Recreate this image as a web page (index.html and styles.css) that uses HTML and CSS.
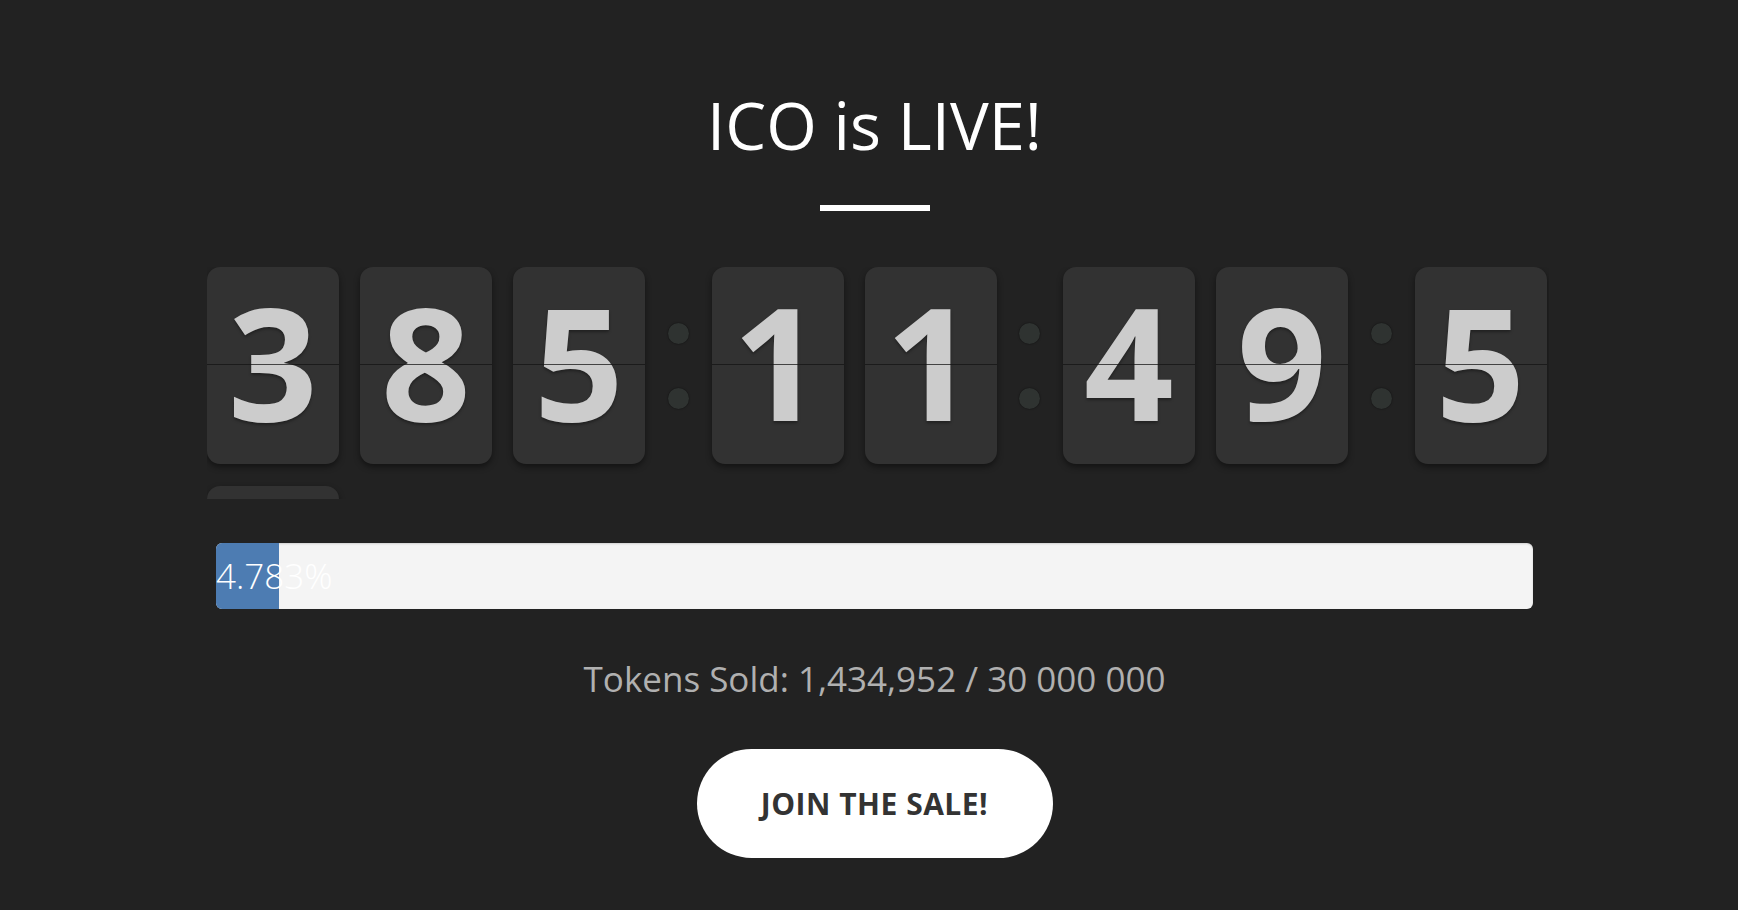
FILE: index.html
```html
<!DOCTYPE html>
<html lang="en">
<head>
<meta charset="utf-8">
<title>ICO is LIVE!</title>
<link rel="stylesheet" href="styles.css">
</head>
<body>
<main class="page">
  <section class="ico">
    <h1 class="ico-title">ICO is LIVE!</h1>
    <div class="ico-rule"></div>
    <div class="countdown">
      <div class="card">3</div>
      <div class="card">8</div>
      <div class="card">5</div>
      <div class="sep"><span class="dot"></span><span class="dot"></span></div>
      <div class="card">1</div>
      <div class="card">1</div>
      <div class="sep"><span class="dot"></span><span class="dot"></span></div>
      <div class="card">4</div>
      <div class="card">9</div>
      <div class="sep"><span class="dot"></span><span class="dot"></span></div>
      <div class="card">5</div>
      <div class="card">2</div>
    </div>
    <div class="progress">
      <div class="progress-fill" style="width: 4.783%"><span class="progress-label">4.783%</span></div>
    </div>
    <p class="sold">Tokens Sold: 1,434,952 / 30 000 000</p>
    <a class="join" href="#">JOIN THE SALE!</a>
  </section>
</main>
</body>
</html>
```

FILE: styles.css
```css
html, body {
  margin: 0;
  padding: 0;
  background: #222222;
}

body {
  font-family: "Open Sans", "Liberation Sans", sans-serif;
  color: #ffffff;
}

.page {
  padding-left: 11px;
  padding-top: 80px;
  height: 830px;
  overflow: hidden;
}

.ico {
  width: 1347px;
  margin: 0 auto;
  display: flex;
  flex-direction: column;
  align-items: center;
}

.ico-title {
  margin: 0;
  font-size: 65px;
  font-weight: 400;
  line-height: 90px;
  color: #ffffff;
}

.ico-rule {
  width: 110px;
  height: 6px;
  background: #ffffff;
  margin-top: 35px;
}

.countdown {
  align-self: flex-start;
  margin-left: 6px;
  margin-top: 56px;
  width: 1342px;
  height: 232px;
  overflow: hidden;
  display: flex;
  flex-wrap: wrap;
  column-gap: 21px;
  row-gap: 22px;
  align-content: flex-start;
}

.card {
  position: relative;
  width: 132px;
  height: 197px;
  border-radius: 13px;
  background: #323232;
  box-shadow: 0 3px 6px rgba(0, 0, 0, 0.45);
  color: #cccccc;
  font-weight: 700;
  font-size: 157px;
  line-height: 187px;
  text-align: center;
  text-shadow: 0 2px 3px rgba(0, 0, 0, 0.35);
  overflow: hidden;
}

.card::after {
  content: "";
  position: absolute;
  left: 0;
  right: 0;
  top: 97px;
  height: 1px;
  background: rgba(20, 20, 20, 0.75);
}

.sep {
  width: 24.5px;
  height: 197px;
  display: flex;
  flex-direction: column;
  align-items: center;
  justify-content: center;
  gap: 44px;
}

.dot {
  width: 21px;
  height: 21px;
  border-radius: 50%;
  background: #2f3331;
  box-shadow: 0 0 2px rgba(0, 0, 0, 0.6);
}

.progress {
  margin-top: 44px;
  width: 1317px;
  height: 66px;
  border-radius: 6px;
  background: #f4f4f4;
  box-shadow: inset 0 1px 2px rgba(0, 0, 0, 0.15);
  display: flex;
  overflow: visible;
}

.progress-fill {
  height: 100%;
  background: #4d7cb2;
  border-radius: 6px 0 0 6px;
  display: flex;
  align-items: center;
}

.progress-label {
  white-space: nowrap;
  font-size: 35px;
  font-weight: 300;
  color: #ffffff;
  line-height: 66px;
}

.sold {
  margin: 45px 0 0;
  font-size: 35px;
  line-height: 49px;
  font-weight: 400;
  color: #b0b0b0;
}

.join {
  margin-top: 46px;
  width: 356px;
  height: 109px;
  border-radius: 55px;
  background: #ffffff;
  color: #333333;
  font-weight: 700;
  font-size: 30px;
  letter-spacing: 0.5px;
  text-decoration: none;
  display: flex;
  align-items: center;
  justify-content: center;
}
```
